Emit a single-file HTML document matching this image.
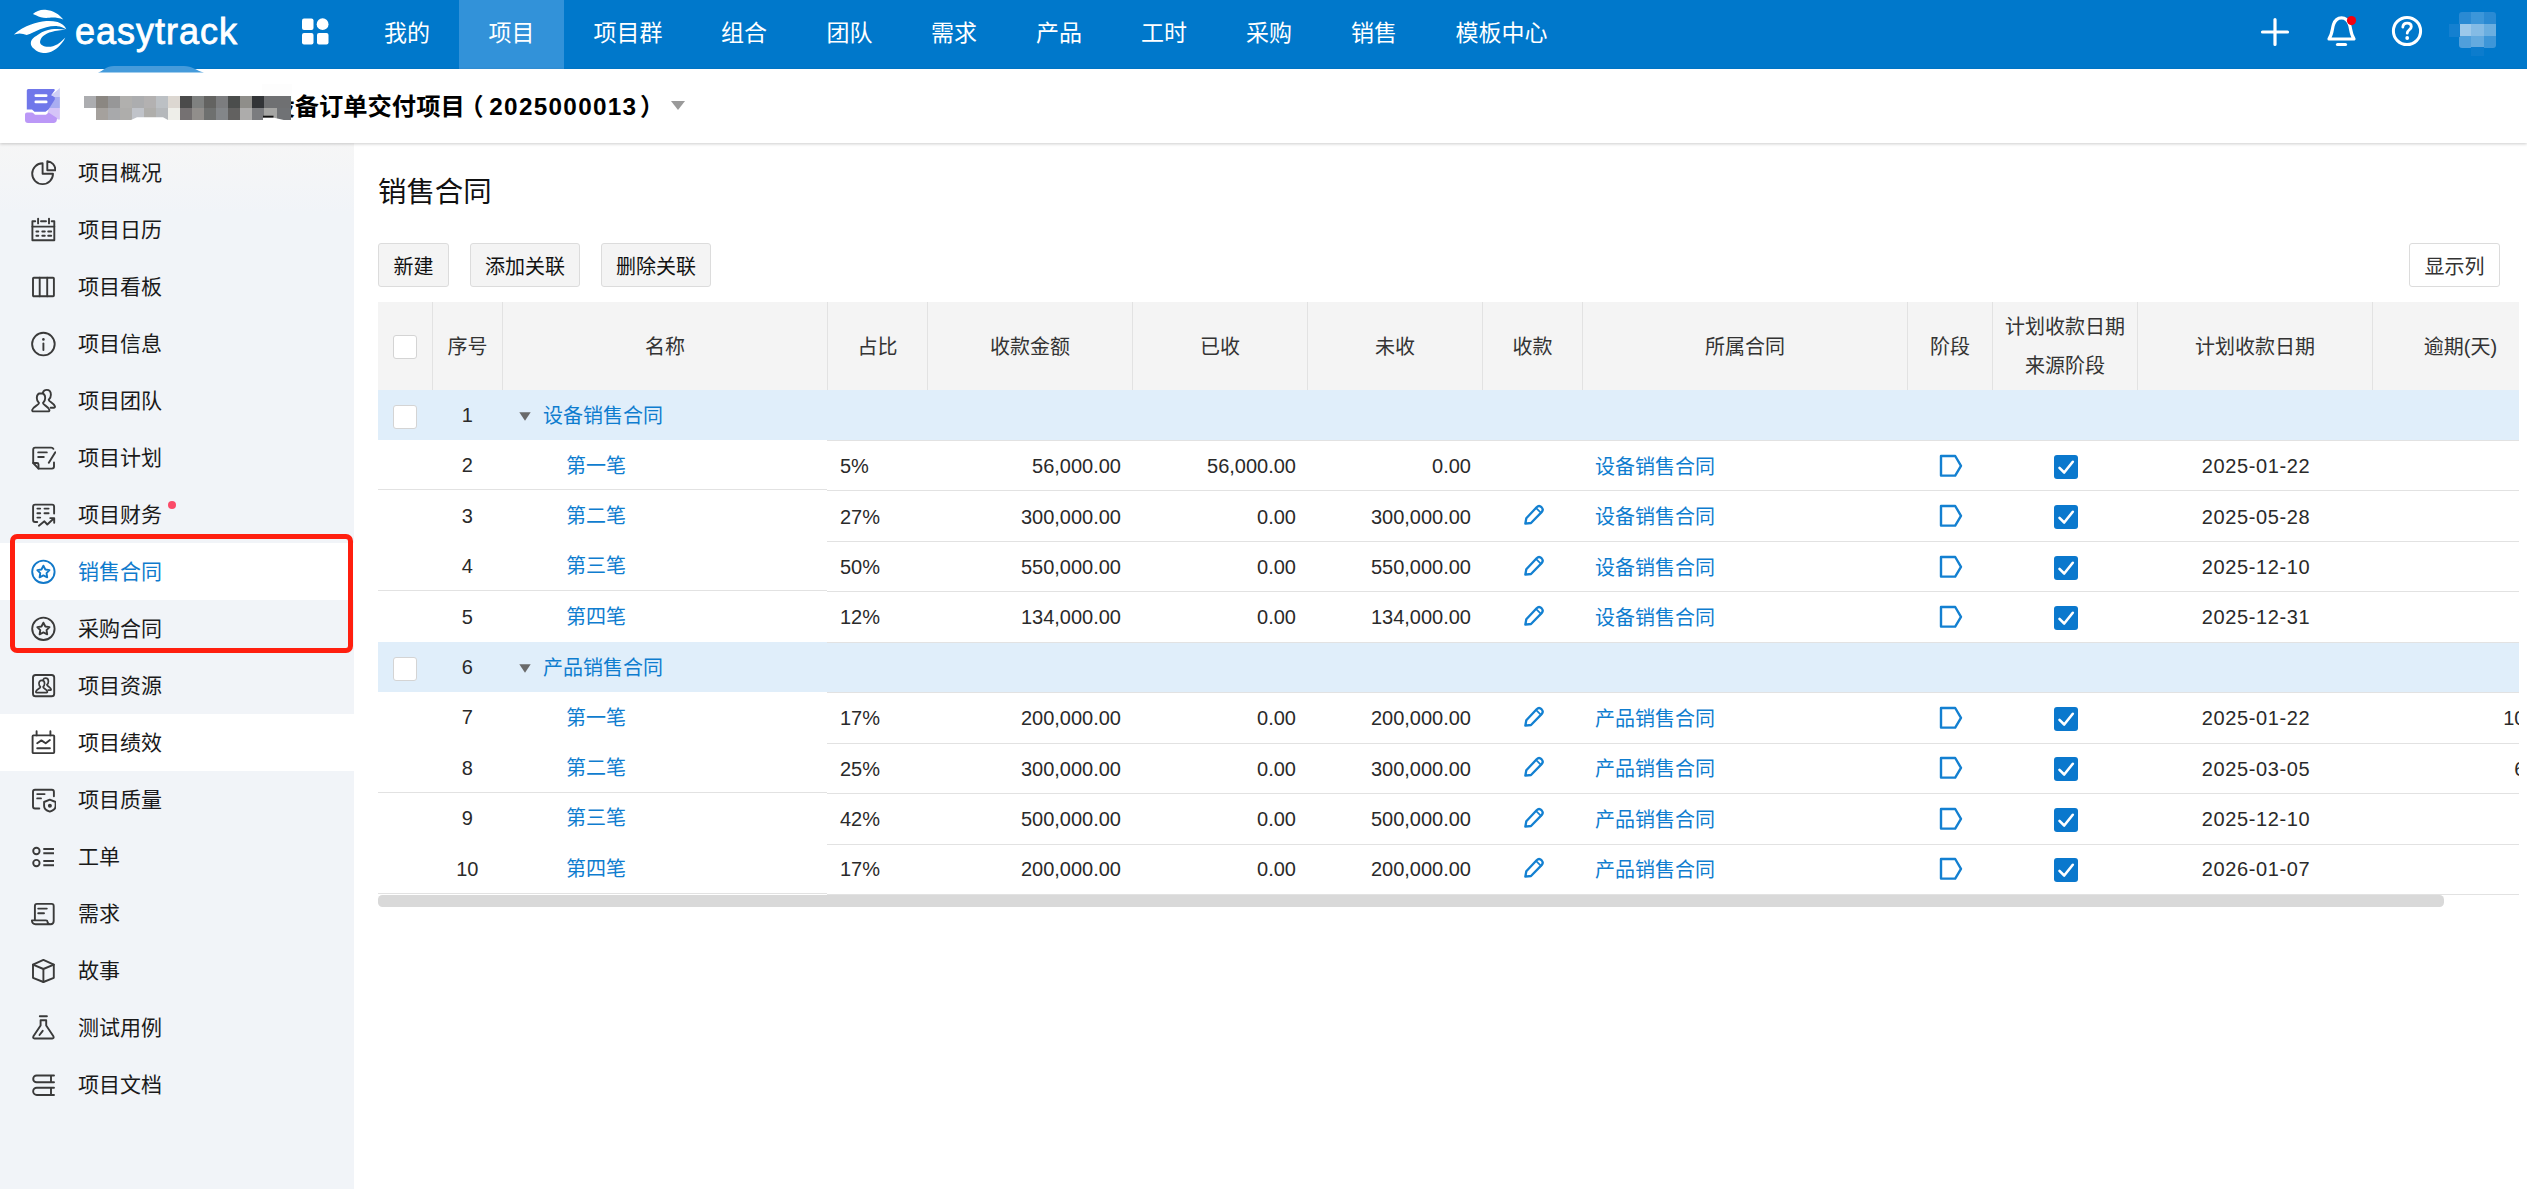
<!DOCTYPE html>
<html lang="zh-CN">
<head>
<meta charset="utf-8">
<title>销售合同</title>
<style>
*{box-sizing:border-box;margin:0;padding:0}
html,body{width:2527px;height:1189px;overflow:hidden;background:#fff}
body{font-family:"Liberation Sans","Noto Sans CJK SC",sans-serif;color:#222;position:relative}
.abs{position:absolute}
/* top bar */
#top{position:absolute;left:0;top:0;width:2527px;height:69px;background:#0078cb}
#top .nav{position:absolute;top:0;height:69px;line-height:66px;color:#fff;font-size:23px;white-space:nowrap;transform:translateX(-50%)}
#top .act{position:absolute;left:459px;top:0;width:105px;height:69px;background:#3292d9}
#logotext{position:absolute;left:75px;top:5.5px;color:#fff;font-size:36px;line-height:52px;letter-spacing:1px;white-space:nowrap;-webkit-text-stroke:0.8px #fff}
/* title bar */
#tbar{position:absolute;left:0;top:69px;width:2527px;height:74px;background:#fff;box-shadow:0 1px 3px rgba(0,0,0,.2);z-index:3}
#ptitle{position:absolute;left:270.4px;top:20.2px;font-size:24.3px;font-weight:700;line-height:36px;color:#000;white-space:nowrap}
/* sidebar */
#side{position:absolute;left:0;top:143px;width:354px;height:1046px;background:linear-gradient(#f6f6f6 0,#f1f4f8 70px,#f1f4f8 100%)}
.si{position:absolute;left:0;width:354px;height:57px}
.si .t{position:absolute;left:78px;top:0;line-height:58px;font-size:21px;color:#1a1a1a;white-space:nowrap}
.si svg{position:absolute;left:30px;top:15.5px;color:#3a3a3a;width:26px;height:26px;fill:none;stroke:#3a3a3a;stroke-width:1.9;stroke-linecap:round;stroke-linejoin:round}
.si.on{background:#fff}
.si.on .t{color:#0f7bcd}
.si.on svg{stroke:#1279c9;color:#1279c9}
.si.hv{background:#fff}
#redbox{position:absolute;left:9.5px;top:534px;width:343px;height:119px;border:5px solid #ff1f0f;border-radius:7px;z-index:5}
/* main */
#h1{position:absolute;left:378px;top:169.5px;font-size:28.4px;line-height:44px;color:#111;white-space:nowrap}
.btn{position:absolute;top:243px;height:44px;border:1px solid #dcdcdc;border-radius:3px;background:#f4f4f4;font-size:20px;line-height:46px;text-align:center;color:#111;white-space:nowrap;overflow:hidden}
/* table */
#thead{position:absolute;left:378px;top:302px;width:2141px;height:88px;background:#f4f4f4}
.th{position:absolute;top:0;height:88px;font-size:20px;color:#333;text-align:center;white-space:nowrap;border-left:1px solid #e2e2e2;display:flex;align-items:center;justify-content:center;line-height:39px;padding-top:2px}
.row{position:absolute;left:378px;width:2141px;height:50.4px;overflow:hidden}
.row.g{background:#e0eefa}
.row .c{position:absolute;top:0;height:50.4px;line-height:50px;font-size:20px;color:#2a2a2a;white-space:nowrap}
.row a{color:#0f7dcf;text-decoration:none;position:relative;top:0.2px}
.row.g a{top:0.9px}
.row .c.r{top:0.8px}
.row .c.r a{top:0.8px}
.ln{position:absolute;height:1px;background:#e2e2e2}
.cb{position:absolute;width:24px;height:24px;border:1px solid #d4d4d4;border-radius:3px;background:#fff}
.ck{position:absolute;width:24px;height:24px;border-radius:3px;background:#0a78cd}
.ck svg,.tg svg,.pn svg{position:absolute;left:0;top:0}
</style>
</head>
<body>
<div id="top">
  <div class="act"></div>
  <div id="logotext">easytrack</div>
  <svg class="abs" style="left:0;top:0" width="80" height="60" viewBox="0 0 80 60" fill="#fff">
    <path d="M32.900 13.900C36 11 41 9.300 45.500 9.800C53 10.500 59.500 14.500 63.300 19.500C58 17.500 53 17.300 49.400 17.800C44 18.300 39.500 17.500 36.500 15.600C35.300 14.900 34 14.300 32.900 13.900Z"/>
    <path d="M13.900 34.500C19 30 25 26.500 31 24.600C36 22.800 41 21.500 46.300 21.100C50 20.800 54 21.200 57.600 22.100C61.500 23.200 64.800 26 66.400 29.300C63.500 27.500 60.500 26.500 57.600 26.200C54 25.900 50 26.300 46.300 27.300C42 28.500 38 30 34 31.900C31.500 33 29 34.200 26.700 35C24.500 34 22 33.500 19.500 33.400C17.500 33.500 15.500 34 13.900 34.500Z"/>
    <path d="M65.800 29.800C61 28.800 56 28.700 51.400 29.300C47 30 42.500 31.700 39.100 34C35 36.500 31.500 39 30.900 42C30.300 45 31.800 47 34 48.800C36.500 51.500 39.500 52.800 43.200 53C47 53 50.500 52.200 53.500 50.400C57 48.500 59.500 46 61.700 43.200C63.300 41.500 64.500 39.500 65.300 37.600C63 40 60.500 42.500 57.600 44.200C54.500 45.900 51.500 46.800 48.400 46.800C46 46.800 43.800 46.500 42.200 45.300C40.500 44.200 39.800 43 40.100 41.200C40.500 39 41.700 37.300 43.200 36C45.500 34 48.500 32.500 51.400 31.900C56 30.800 61 30.200 65.800 29.800Z"/>
  </svg>
  <svg class="abs" style="left:302px;top:18px" width="27" height="27" viewBox="0 0 27 27" fill="#fff">
    <rect x="0" y="0.5" width="11.5" height="11.5" rx="2"/><circle cx="20.6" cy="6.2" r="5.9"/>
    <rect x="0" y="15" width="11.5" height="11.5" rx="2"/><rect x="15" y="15" width="11.5" height="11.5" rx="2"/>
  </svg>
  <div class="nav" style="left:407px">我的</div>
  <div class="nav" style="left:511.5px">项目</div>
  <div class="nav" style="left:628px">项目群</div>
  <div class="nav" style="left:744px">组合</div>
  <div class="nav" style="left:849.5px">团队</div>
  <div class="nav" style="left:954px">需求</div>
  <div class="nav" style="left:1059px">产品</div>
  <div class="nav" style="left:1164px">工时</div>
  <div class="nav" style="left:1269px">采购</div>
  <div class="nav" style="left:1374px">销售</div>
  <div class="nav" style="left:1501.5px">模板中心</div>
  <svg class="abs" style="left:2259px;top:16px" width="32" height="32" viewBox="0 0 32 32" fill="none" stroke="#fff" stroke-width="3.2" stroke-linecap="round"><path d="M16 3.5V28.5M3.5 16H28.5"/></svg>
  <svg class="abs" style="left:2324px;top:12px" width="36" height="38" viewBox="0 0 36 38" fill="none" stroke="#fff" stroke-width="3.2" stroke-linecap="round" stroke-linejoin="round"><path d="M5 27 C8.5 22 8 17 9.5 12.5 C11 8 14 5.8 17.5 5.8 C21 5.8 24 8 25.500 12.5 C27 17 26.500 22 30 27 Z"/><path d="M13.500 32.5H21.500"/><circle cx="27.5" cy="8.6" r="4.6" fill="#f5000d" stroke="none"/></svg>
  <svg class="abs" style="left:2390px;top:14px" width="34" height="34" viewBox="0 0 34 34" fill="none" stroke="#fff" stroke-width="3" stroke-linecap="round" stroke-linejoin="round"><circle cx="17" cy="17" r="13.6"/><path d="M12.800 13.200 C13 10.500 14.800 9.200 17.200 9.200 C19.700 9.200 21.300 10.700 21.300 12.700 C21.300 15.700 17.200 15.800 17.200 19.200" stroke-width="2.8"/><circle cx="17.200" cy="24" r="1.900" fill="#fff" stroke="none"/></svg>
  <div class="abs" style="left:2459px;top:12px;width:37px;height:36px;border-radius:3px;overflow:hidden">
    <i class="abs" style="left:0.0px;top:0px;width:12.4px;height:12px;background:#2a8ad3"></i>
    <i class="abs" style="left:12.3px;top:0px;width:12.4px;height:12px;background:#3c96d9"></i>
    <i class="abs" style="left:24.6px;top:0px;width:12.4px;height:12px;background:#2a8ad3"></i>
    <i class="abs" style="left:0.0px;top:12px;width:12.4px;height:12px;background:#9cc8ea"></i>
    <i class="abs" style="left:12.3px;top:12px;width:12.4px;height:12px;background:#84bbe5"></i>
    <i class="abs" style="left:24.6px;top:12px;width:12.4px;height:12px;background:#6aaee0"></i>
    <i class="abs" style="left:0.0px;top:24px;width:12.4px;height:12px;background:#4f9fdb"></i>
    <i class="abs" style="left:12.3px;top:24px;width:12.4px;height:12px;background:#63aadf"></i>
    <i class="abs" style="left:24.6px;top:24px;width:12.4px;height:12px;background:#3d96d8"></i>
  </div>
  <i class="abs" style="left:2449px;top:24px;width:11px;height:13px;background:#1480d0"></i>
  <i class="abs" style="left:2471px;top:47px;width:13px;height:9px;background:#0c7ccd"></i>
</div>
<div id="tbar">
  <svg class="abs" style="left:96px;top:-4px" width="112" height="8" viewBox="0 0 112 8"><path d="M2 7.500C8 5.500 10 1 18 1H88C96 1 100 5.500 108 7.500Z" fill="#459bdb"/></svg>
  <svg class="abs" style="left:24px;top:18px" width="38" height="38" viewBox="0 0 38 38">
    <path fill="#cfd0f6" d="M35.900 1L27.200 8.300L30.800 9.800H35.900Z"/>
    <path fill="#a9adf1" d="M30.800 9.800H35.900V21H25Z"/>
    <path fill="#d5c4f8" d="M25.200 21H35.900V32.500H34L23.500 26Z"/>
    <path fill="#7077ea" d="M4.300 1.900H30L31 3L27.200 8.300L30.800 10V12.500L24.500 22.500L21.500 24.800H10.500L8 22.600H2.800V3.400Q2.800 1.900 4.300 1.900Z"/>
    <path stroke="#fff" stroke-width="2.700" stroke-linecap="round" d="M11.800 8.700H22.200M11.800 14.900H22.200"/>
    <path fill="#bb98f7" d="M1 27.500Q1 25.400 3 25.400H7.500Q9 25.400 10 26.700L11 27.800H22L24.600 25.400L33 31Q33 35.900 30 35.900H4Q1 35.900 1 32.900Z"/>
  </svg>
  <div class="abs" style="left:84px;top:27px;width:208px;height:24px;z-index:2">
    <i class="abs" style="left:0.0px;top:0;width:12.2px;height:12px;background:#acadb0"></i><i class="abs" style="left:0.0px;top:12px;width:12.2px;height:12px;background:#ffffff"></i>
    <i class="abs" style="left:12.0px;top:0;width:12.2px;height:12px;background:#8b8782"></i><i class="abs" style="left:12.0px;top:12px;width:12.2px;height:12px;background:#a5a19d"></i>
    <i class="abs" style="left:24.1px;top:0;width:12.2px;height:12px;background:#979798"></i><i class="abs" style="left:24.1px;top:12px;width:12.2px;height:12px;background:#a8a9ab"></i>
    <i class="abs" style="left:36.1px;top:0;width:12.2px;height:12px;background:#b1b0ae"></i><i class="abs" style="left:36.1px;top:12px;width:12.2px;height:12px;background:#aeadab"></i>
    <i class="abs" style="left:48.1px;top:0;width:12.2px;height:12px;background:#acadaf"></i><i class="abs" style="left:48.1px;top:12px;width:12.2px;height:12px;background:#c0c3c9"></i>
    <i class="abs" style="left:60.1px;top:0;width:12.2px;height:12px;background:#b3b1b1"></i><i class="abs" style="left:60.1px;top:12px;width:12.2px;height:12px;background:#afaeab"></i>
    <i class="abs" style="left:72.2px;top:0;width:12.2px;height:12px;background:#bcc0c4"></i><i class="abs" style="left:72.2px;top:12px;width:12.2px;height:12px;background:#b5b8bb"></i>
    <i class="abs" style="left:84.2px;top:0;width:12.2px;height:12px;background:#dcd7d1"></i><i class="abs" style="left:84.2px;top:12px;width:12.2px;height:12px;background:#eeeee9"></i>
    <i class="abs" style="left:96.2px;top:0;width:12.2px;height:12px;background:#4b4b4b"></i><i class="abs" style="left:96.2px;top:12px;width:12.2px;height:12px;background:#757172"></i>
    <i class="abs" style="left:108.3px;top:0;width:12.2px;height:12px;background:#7f8180"></i><i class="abs" style="left:108.3px;top:12px;width:12.2px;height:12px;background:#918e8b"></i>
    <i class="abs" style="left:120.3px;top:0;width:12.2px;height:12px;background:#636361"></i><i class="abs" style="left:120.3px;top:12px;width:12.2px;height:12px;background:#6e706f"></i>
    <i class="abs" style="left:132.3px;top:0;width:12.2px;height:12px;background:#7c7d7f"></i><i class="abs" style="left:132.3px;top:12px;width:12.2px;height:12px;background:#838689"></i>
    <i class="abs" style="left:144.4px;top:0;width:12.2px;height:12px;background:#4b4d4c"></i><i class="abs" style="left:144.4px;top:12px;width:12.2px;height:12px;background:#626160"></i>
    <i class="abs" style="left:156.4px;top:0;width:12.2px;height:12px;background:#8f8e8a"></i><i class="abs" style="left:156.4px;top:12px;width:12.2px;height:12px;background:#adacab"></i>
    <i class="abs" style="left:168.4px;top:0;width:12.2px;height:12px;background:#323437"></i><i class="abs" style="left:168.4px;top:12px;width:12.2px;height:12px;background:#7b7c7f"></i>
    <i class="abs" style="left:180.4px;top:0;width:12.2px;height:12px;background:#6f7072"></i><i class="abs" style="left:180.4px;top:12px;width:12.2px;height:12px;background:#a5a5a3"></i>
    <i class="abs" style="left:192.5px;top:0;width:14.6px;height:12px;background:#6f7072"></i><i class="abs" style="left:192.5px;top:12px;width:14.6px;height:12px;background:#707275"></i>
    <svg class="abs" style="left:0;top:0" width="206" height="24" viewBox="0 0 206 24"><path d="M47 24L53 21.300H79L84 24Z" fill="#fff"/><path d="M179 19.700H189.500V21.800H179Z" fill="#111"/><path d="M179 24.500V21.800H190L202 24.500Z" fill="#fff"/></svg>
  </div>
  <i class="abs" style="left:262px;top:15px;width:30px;height:12px;background:#fdfdfd;z-index:2"></i>
  <div id="ptitle">设备订单交付项目<span style="margin-left:-5.500px">（</span><span style="letter-spacing:1.3px;margin:0 2.600px 0 5.700px">2025000013</span>）</div>
  <svg class="abs" style="left:670px;top:31px" width="16" height="11" viewBox="0 0 16 11"><path d="M1 1H15L8 10Z" fill="#9a9a9a"/></svg>
</div>
<div id="side">
  <div class="si " style="top:1px"><svg viewBox="0 0 26 26"><path d="M12.600 3.300A10.400 10.400 0 1 0 23 13.700H12.600Z"/><path d="M17.300 1.300V10.300H25.300A8.500 8.500 0 0 0 17.300 1.300Z"/></svg><span class="t">项目概况</span></div>
  <div class="si " style="top:58px"><svg viewBox="0 0 26 26"><path d="M5.200 4.300H2.400V23.300H24.300V4.300H21.700M11 4.300H16"/><path d="M8.100 1.600V6.400M19 1.600V6.400M2.400 9.600H24.300"/><path d="M6.400 14.500H8.300M12.300 14.500H14.800M18.200 14.500H21.200M6.400 18.800H8.300M12.300 18.800H14.800M18.200 18.800H21.200" stroke-width="1.900"/></svg><span class="t">项目日历</span></div>
  <div class="si " style="top:115px"><svg viewBox="0 0 26 26"><rect x="3" y="3.700" width="20.900" height="18.600" rx="0.800"/><path d="M9.700 3.700V22.300M17.200 3.700V22.300"/></svg><span class="t">项目看板</span></div>
  <div class="si " style="top:172px"><svg viewBox="0 0 26 26"><circle cx="13.400" cy="13.100" r="11.300"/><path d="M13.400 12.500V19"/><circle cx="13.400" cy="8.400" r="1.300" fill="currentColor" stroke="none"/></svg><span class="t">项目信息</span></div>
  <div class="si " style="top:229px"><svg viewBox="0 0 26 26"><path d="M11 5.2C8.3 5.2 6.8 7.3 6.8 10C6.8 12.4 7.800 14 9 15C9 17 3 18.500 2.200 22C2 23 2.600 23.400 3.400 23.400H18.200C19 23.400 19.600 23 19.400 22C18.600 18.500 13 17 13 15C14.200 14 15.200 12.400 15.200 10C15.200 7.300 13.700 5.200 11 5.200Z"/><path d="M12.9 4.6C13.5 2.9 14.9 1.9 16.7 1.9C19.4 1.9 20.9 4 20.9 6.700C20.900 9.100 19.900 10.700 18.700 11.700C18.700 13.700 24 14.900 24.900 18.300C25.100 19.200 24.600 19.700 23.800 19.700H20.600"/></svg><span class="t">项目团队</span></div>
  <div class="si " style="top:286px"><svg viewBox="0 0 26 26"><path d="M23.400 3.800C23 3 22.200 2.600 21.200 2.600H5.200Q3.200 2.600 3.200 4.600V18L8.500 23.600H22Q24 23.600 24 21.600V17.500"/><path d="M3.200 18H7Q8.500 18 8.500 19.500V23.600"/><path d="M8.200 7.400H16.800M8.200 12H13.800M25.300 7.200L18.800 17.800"/></svg><span class="t">项目计划</span></div>
  <div class="si " style="top:343px"><svg viewBox="0 0 26 26"><path d="M24.100 11.500V4.600Q24.100 2.600 22.100 2.600H5.100Q3.100 2.600 3.100 4.600V18Q3.100 20 5.100 20H7.200"/><path d="M7.400 6.600H10.200M14.500 6.600H18.600M7.400 11.200H10.200M14.500 11.200H18.600M7.400 15.600H10.200"/><path d="M8.900 23.700L14.400 19.300L17.300 22.500L24 16.300M20.200 16.100H24.200V20.700"/></svg><span class="t">项目财务</span><i class="abs" style="left:168px;top:15px;width:8px;height:8px;border-radius:50%;background:#fb4a68"></i></div>
  <div class="si on" style="top:400px"><svg viewBox="0 0 26 26"><circle cx="13.400" cy="12.800" r="11.200"/><path d="M13.4 6.7L15.35 10.45L19.5 11.1L16.55 14.1L17.2 18.3L13.4 16.4L9.6 18.3L10.25 14.1L7.3 11.1L11.45 10.45Z" stroke-width="1.900"/></svg><span class="t">销售合同</span></div>
  <div class="si " style="top:457px"><svg viewBox="0 0 26 26"><circle cx="13.400" cy="12.800" r="11.200"/><path d="M13.4 6.7L15.35 10.45L19.5 11.1L16.55 14.1L17.2 18.3L13.4 16.4L9.6 18.3L10.25 14.1L7.3 11.1L11.45 10.45Z" stroke-width="1.900"/></svg><span class="t">采购合同</span></div>
  <div class="si " style="top:514px"><svg viewBox="0 0 26 26"><rect x="3" y="2" width="21.200" height="21.300" rx="2.600"/><g transform="translate(4.400,3.900) scale(0.67)" stroke-width="2.500"><path d="M11 5.2C8.3 5.2 6.8 7.3 6.8 10C6.8 12.4 7.800 14 9 15C9 17 3 18.500 2.200 22C2 23 2.600 23.400 3.400 23.400H18.200C19 23.400 19.600 23 19.400 22C18.600 18.500 13 17 13 15C14.200 14 15.200 12.400 15.200 10C15.200 7.300 13.700 5.200 11 5.200Z"/><path d="M12.9 4.6C13.5 2.9 14.9 1.9 16.7 1.9C19.4 1.9 20.9 4 20.9 6.700C20.900 9.100 19.900 10.700 18.700 11.700C18.700 13.700 24 14.900 24.900 18.300C25.100 19.200 24.600 19.700 23.800 19.700H20.600"/></g></svg><span class="t">项目资源</span></div>
  <div class="si hv" style="top:571px"><svg viewBox="0 0 26 26"><rect x="2.600" y="5.400" width="21.600" height="17.700" rx="0.800"/><path d="M6.600 1.300V5.400M20.400 1.300V5.400M7.200 13.300L11.400 10.400L15.700 13.300L19.900 10M7.200 18.200H19.900"/></svg><span class="t">项目绩效</span></div>
  <div class="si " style="top:628px"><svg viewBox="0 0 26 26"><path d="M23.900 9.300V4.700Q23.900 2.700 21.900 2.700H5Q3 2.700 3 4.700V19.500Q3 21.500 5 21.500H9.300"/><path d="M7.200 7.100H14.600M7.200 11.400H11"/><path d="M19.800 12.600L14.100 15V19C14.100 22 17 23.800 19.800 24.600C22.600 23.800 25.600 22 25.600 19V15Z"/><circle cx="19.900" cy="18.700" r="2" fill="currentColor" stroke="none"/></svg><span class="t">项目质量</span></div>
  <div class="si " style="top:685px"><svg viewBox="0 0 26 26"><circle cx="6.400" cy="7" r="3.200"/><circle cx="6.400" cy="19.100" r="3.200"/><path d="M13.300 5.100H24M13.300 9.300H24M13.300 17H24M13.300 21.300H24" stroke-width="2" stroke-linecap="butt"/></svg><span class="t">工单</span></div>
  <div class="si " style="top:742px"><svg viewBox="0 0 26 26"><path d="M4.900 19.300V4.900Q4.900 2.900 6.900 2.900H21.700Q23.700 2.900 23.700 4.900V20Q23.700 23.200 20.500 23.200H5.500C3.200 23.200 1.900 21.600 1.900 19.400H16Q17.400 19.400 17.500 20.800Q17.900 23.200 20.500 23.200"/><path d="M8.200 7.600H16.800M8.200 12.200H14"/></svg><span class="t">需求</span></div>
  <div class="si " style="top:799px"><svg viewBox="0 0 26 26"><path d="M13.400 1.900L23.800 6.700V19.800L13.400 24L3 19.800V6.700Z"/><path d="M3 6.700L13.400 11L23.800 6.700M13.400 11V24"/></svg><span class="t">故事</span></div>
  <div class="si " style="top:856px"><svg viewBox="0 0 26 26"><path d="M9.800 1.300H16.900"/><path d="M10.600 5.300H16.200V10.500L23.400 21.300Q24.300 23.500 22.300 23.500H4.500Q2.500 23.500 3.400 21.300L10.600 10.500Z"/><path d="M12.700 15.800L9.500 20"/></svg><span class="t">测试用例</span></div>
  <div class="si " style="top:913px"><svg viewBox="0 0 26 26"><path d="M24 3.500H6.600A3.400 3.400 0 0 0 6.600 10.300H24M21 3.500V10.300"/><path d="M24 15.700H6.800A3.650 3.650 0 0 0 6.800 23H24M21 15.700V23"/></svg><span class="t">项目文档</span></div>
</div>
<div id="redbox"></div>
<div id="h1">销售合同</div>
<div id="main">
<div class="btn" style="left:378px;width:71px">新建</div>
<div class="btn" style="left:470px;width:110px">添加关联</div>
<div class="btn" style="left:601px;width:110px">删除关联</div>
<div class="btn" style="left:2409px;width:91px;background:#fff;color:#333">显示列</div>
<div id="thead">
  <div class="th" style="left:0;width:54px;border-left:0"><i class="cb" style="left:15px;top:33px"></i></div>
  <div class="th" style="left:54px;width:70px">序号</div>
  <div class="th" style="left:124px;width:325px">名称</div>
  <div class="th" style="left:449px;width:100px">占比</div>
  <div class="th" style="left:549px;width:205px">收款金额</div>
  <div class="th" style="left:754px;width:175px">已收</div>
  <div class="th" style="left:929px;width:175px">未收</div>
  <div class="th" style="left:1104px;width:100px">收款</div>
  <div class="th" style="left:1204px;width:325px">所属合同</div>
  <div class="th" style="left:1529px;width:85px">阶段</div>
  <div class="th" style="left:1614px;width:145px">计划收款日期<br>来源阶段</div>
  <div class="th" style="left:1759px;width:235px">计划收款日期</div>
  <div class="th" style="left:1994px;width:176px">逾期(天)</div>
</div>
<div class="row g" style="top:390.0px"><i class="cb" style="left:15px;top:15px"></i><span class="c" style="left:54px;width:70.5px;text-align:center">1</span><svg class="abs" style="left:140.500px;top:21.500px" width="12" height="9" viewBox="0 0 12 9"><path d="M0.300 0.300H11.700L6 8.700Z" fill="#6a6a6a"/></svg><span class="c" style="left:165px"><a>设备销售合同</a></span></div>
<div class="row" style="top:440.4px"><span class="c" style="left:54px;width:70.5px;text-align:center">2</span><span class="c" style="left:188px"><a>第一笔</a></span><span class="c r" style="left:462px">5%</span><span class="c r" style="left:550px;width:193px;text-align:right">56,000.00</span><span class="c r" style="left:755px;width:163px;text-align:right">56,000.00</span><span class="c r" style="left:930px;width:163px;text-align:right">0.00</span><span class="c r" style="left:1217px"><a>设备销售合同</a></span><span class="tg abs" style="left:1561px;top:13.500px;width:24px;height:24px"><svg width="24" height="24" viewBox="0 0 24 24" fill="none" stroke="#1380d1" stroke-width="2.400" stroke-linejoin="round"><path d="M2 2H16.200L22 11.800L16.200 21.600H2Z"/></svg></span><span class="ck" style="left:1676px;top:14.500px"><svg width="24" height="24" viewBox="0 0 24 24" fill="none" stroke="#fff" stroke-width="2.600" stroke-linecap="round" stroke-linejoin="round"><path d="M5.500 12.800L10.200 17.500L18.800 6.800"/></svg></span><span class="c r" style="left:1760.500px;width:235px;text-align:center;letter-spacing:0.600px">2025-01-22</span></div>
<div class="row" style="top:490.8px"><span class="c" style="left:54px;width:70.5px;text-align:center">3</span><span class="c" style="left:188px"><a>第二笔</a></span><span class="c r" style="left:462px">27%</span><span class="c r" style="left:550px;width:193px;text-align:right">300,000.00</span><span class="c r" style="left:755px;width:163px;text-align:right">0.00</span><span class="c r" style="left:930px;width:163px;text-align:right">300,000.00</span><span class="pn abs" style="left:1145px;top:13.500px;width:22px;height:22px"><svg width="22" height="22" viewBox="0 0 22 22" fill="none" stroke="#1380d1" stroke-width="2.300" stroke-linejoin="round" stroke-linecap="round"><path d="M2.300 19.700L3.300 14.300L13.600 3.300C15 1.900 17.100 1.900 18.500 3.200C19.900 4.600 19.900 6.700 18.600 8.100L8 19L2.300 19.700Z"/><path d="M13.200 4.200L17.800 8.600" stroke-width="1.700"/></svg></span><span class="c r" style="left:1217px"><a>设备销售合同</a></span><span class="tg abs" style="left:1561px;top:13.500px;width:24px;height:24px"><svg width="24" height="24" viewBox="0 0 24 24" fill="none" stroke="#1380d1" stroke-width="2.400" stroke-linejoin="round"><path d="M2 2H16.200L22 11.800L16.200 21.600H2Z"/></svg></span><span class="ck" style="left:1676px;top:14.500px"><svg width="24" height="24" viewBox="0 0 24 24" fill="none" stroke="#fff" stroke-width="2.600" stroke-linecap="round" stroke-linejoin="round"><path d="M5.500 12.800L10.200 17.500L18.800 6.800"/></svg></span><span class="c r" style="left:1760.500px;width:235px;text-align:center;letter-spacing:0.600px">2025-05-28</span></div>
<div class="row" style="top:541.2px"><span class="c" style="left:54px;width:70.5px;text-align:center">4</span><span class="c" style="left:188px"><a>第三笔</a></span><span class="c r" style="left:462px">50%</span><span class="c r" style="left:550px;width:193px;text-align:right">550,000.00</span><span class="c r" style="left:755px;width:163px;text-align:right">0.00</span><span class="c r" style="left:930px;width:163px;text-align:right">550,000.00</span><span class="pn abs" style="left:1145px;top:13.500px;width:22px;height:22px"><svg width="22" height="22" viewBox="0 0 22 22" fill="none" stroke="#1380d1" stroke-width="2.300" stroke-linejoin="round" stroke-linecap="round"><path d="M2.300 19.700L3.300 14.300L13.600 3.300C15 1.900 17.100 1.900 18.500 3.200C19.900 4.600 19.900 6.700 18.600 8.100L8 19L2.300 19.700Z"/><path d="M13.200 4.200L17.800 8.600" stroke-width="1.700"/></svg></span><span class="c r" style="left:1217px"><a>设备销售合同</a></span><span class="tg abs" style="left:1561px;top:13.500px;width:24px;height:24px"><svg width="24" height="24" viewBox="0 0 24 24" fill="none" stroke="#1380d1" stroke-width="2.400" stroke-linejoin="round"><path d="M2 2H16.200L22 11.800L16.200 21.600H2Z"/></svg></span><span class="ck" style="left:1676px;top:14.500px"><svg width="24" height="24" viewBox="0 0 24 24" fill="none" stroke="#fff" stroke-width="2.600" stroke-linecap="round" stroke-linejoin="round"><path d="M5.500 12.800L10.200 17.500L18.800 6.800"/></svg></span><span class="c r" style="left:1760.500px;width:235px;text-align:center;letter-spacing:0.600px">2025-12-10</span></div>
<div class="row" style="top:591.6px"><span class="c" style="left:54px;width:70.5px;text-align:center">5</span><span class="c" style="left:188px"><a>第四笔</a></span><span class="c r" style="left:462px">12%</span><span class="c r" style="left:550px;width:193px;text-align:right">134,000.00</span><span class="c r" style="left:755px;width:163px;text-align:right">0.00</span><span class="c r" style="left:930px;width:163px;text-align:right">134,000.00</span><span class="pn abs" style="left:1145px;top:13.500px;width:22px;height:22px"><svg width="22" height="22" viewBox="0 0 22 22" fill="none" stroke="#1380d1" stroke-width="2.300" stroke-linejoin="round" stroke-linecap="round"><path d="M2.300 19.700L3.300 14.300L13.600 3.300C15 1.900 17.100 1.900 18.500 3.200C19.900 4.600 19.900 6.700 18.600 8.100L8 19L2.300 19.700Z"/><path d="M13.200 4.200L17.800 8.600" stroke-width="1.700"/></svg></span><span class="c r" style="left:1217px"><a>设备销售合同</a></span><span class="tg abs" style="left:1561px;top:13.500px;width:24px;height:24px"><svg width="24" height="24" viewBox="0 0 24 24" fill="none" stroke="#1380d1" stroke-width="2.400" stroke-linejoin="round"><path d="M2 2H16.200L22 11.800L16.200 21.600H2Z"/></svg></span><span class="ck" style="left:1676px;top:14.500px"><svg width="24" height="24" viewBox="0 0 24 24" fill="none" stroke="#fff" stroke-width="2.600" stroke-linecap="round" stroke-linejoin="round"><path d="M5.500 12.800L10.200 17.500L18.800 6.800"/></svg></span><span class="c r" style="left:1760.500px;width:235px;text-align:center;letter-spacing:0.600px">2025-12-31</span></div>
<div class="row g" style="top:642.0px"><i class="cb" style="left:15px;top:15px"></i><span class="c" style="left:54px;width:70.5px;text-align:center">6</span><svg class="abs" style="left:140.500px;top:21.500px" width="12" height="9" viewBox="0 0 12 9"><path d="M0.300 0.300H11.700L6 8.700Z" fill="#6a6a6a"/></svg><span class="c" style="left:165px"><a>产品销售合同</a></span></div>
<div class="row" style="top:692.4px"><span class="c" style="left:54px;width:70.5px;text-align:center">7</span><span class="c" style="left:188px"><a>第一笔</a></span><span class="c r" style="left:462px">17%</span><span class="c r" style="left:550px;width:193px;text-align:right">200,000.00</span><span class="c r" style="left:755px;width:163px;text-align:right">0.00</span><span class="c r" style="left:930px;width:163px;text-align:right">200,000.00</span><span class="pn abs" style="left:1145px;top:13.500px;width:22px;height:22px"><svg width="22" height="22" viewBox="0 0 22 22" fill="none" stroke="#1380d1" stroke-width="2.300" stroke-linejoin="round" stroke-linecap="round"><path d="M2.300 19.700L3.300 14.300L13.600 3.300C15 1.900 17.100 1.900 18.500 3.200C19.900 4.600 19.900 6.700 18.600 8.100L8 19L2.300 19.700Z"/><path d="M13.200 4.200L17.800 8.600" stroke-width="1.700"/></svg></span><span class="c r" style="left:1217px"><a>产品销售合同</a></span><span class="tg abs" style="left:1561px;top:13.500px;width:24px;height:24px"><svg width="24" height="24" viewBox="0 0 24 24" fill="none" stroke="#1380d1" stroke-width="2.400" stroke-linejoin="round"><path d="M2 2H16.200L22 11.800L16.200 21.600H2Z"/></svg></span><span class="ck" style="left:1676px;top:14.500px"><svg width="24" height="24" viewBox="0 0 24 24" fill="none" stroke="#fff" stroke-width="2.600" stroke-linecap="round" stroke-linejoin="round"><path d="M5.500 12.800L10.200 17.500L18.800 6.800"/></svg></span><span class="c r" style="left:1760.500px;width:235px;text-align:center;letter-spacing:0.600px">2025-01-22</span><span class="c r" style="left:2100px;width:58.500px;text-align:right">101</span></div>
<div class="row" style="top:742.8px"><span class="c" style="left:54px;width:70.5px;text-align:center">8</span><span class="c" style="left:188px"><a>第二笔</a></span><span class="c r" style="left:462px">25%</span><span class="c r" style="left:550px;width:193px;text-align:right">300,000.00</span><span class="c r" style="left:755px;width:163px;text-align:right">0.00</span><span class="c r" style="left:930px;width:163px;text-align:right">300,000.00</span><span class="pn abs" style="left:1145px;top:13.500px;width:22px;height:22px"><svg width="22" height="22" viewBox="0 0 22 22" fill="none" stroke="#1380d1" stroke-width="2.300" stroke-linejoin="round" stroke-linecap="round"><path d="M2.300 19.700L3.300 14.300L13.600 3.300C15 1.900 17.100 1.900 18.500 3.200C19.900 4.600 19.900 6.700 18.600 8.100L8 19L2.300 19.700Z"/><path d="M13.200 4.200L17.800 8.600" stroke-width="1.700"/></svg></span><span class="c r" style="left:1217px"><a>产品销售合同</a></span><span class="tg abs" style="left:1561px;top:13.500px;width:24px;height:24px"><svg width="24" height="24" viewBox="0 0 24 24" fill="none" stroke="#1380d1" stroke-width="2.400" stroke-linejoin="round"><path d="M2 2H16.200L22 11.800L16.200 21.600H2Z"/></svg></span><span class="ck" style="left:1676px;top:14.500px"><svg width="24" height="24" viewBox="0 0 24 24" fill="none" stroke="#fff" stroke-width="2.600" stroke-linecap="round" stroke-linejoin="round"><path d="M5.500 12.800L10.200 17.500L18.800 6.800"/></svg></span><span class="c r" style="left:1760.500px;width:235px;text-align:center;letter-spacing:0.600px">2025-03-05</span><span class="c r" style="left:2100px;width:58.500px;text-align:right">60</span></div>
<div class="row" style="top:793.2px"><span class="c" style="left:54px;width:70.5px;text-align:center">9</span><span class="c" style="left:188px"><a>第三笔</a></span><span class="c r" style="left:462px">42%</span><span class="c r" style="left:550px;width:193px;text-align:right">500,000.00</span><span class="c r" style="left:755px;width:163px;text-align:right">0.00</span><span class="c r" style="left:930px;width:163px;text-align:right">500,000.00</span><span class="pn abs" style="left:1145px;top:13.500px;width:22px;height:22px"><svg width="22" height="22" viewBox="0 0 22 22" fill="none" stroke="#1380d1" stroke-width="2.300" stroke-linejoin="round" stroke-linecap="round"><path d="M2.300 19.700L3.300 14.300L13.600 3.300C15 1.900 17.100 1.900 18.500 3.200C19.900 4.600 19.900 6.700 18.600 8.100L8 19L2.300 19.700Z"/><path d="M13.200 4.200L17.800 8.600" stroke-width="1.700"/></svg></span><span class="c r" style="left:1217px"><a>产品销售合同</a></span><span class="tg abs" style="left:1561px;top:13.500px;width:24px;height:24px"><svg width="24" height="24" viewBox="0 0 24 24" fill="none" stroke="#1380d1" stroke-width="2.400" stroke-linejoin="round"><path d="M2 2H16.200L22 11.800L16.200 21.600H2Z"/></svg></span><span class="ck" style="left:1676px;top:14.500px"><svg width="24" height="24" viewBox="0 0 24 24" fill="none" stroke="#fff" stroke-width="2.600" stroke-linecap="round" stroke-linejoin="round"><path d="M5.500 12.800L10.200 17.500L18.800 6.800"/></svg></span><span class="c r" style="left:1760.500px;width:235px;text-align:center;letter-spacing:0.600px">2025-12-10</span></div>
<div class="row" style="top:843.6px"><span class="c" style="left:54px;width:70.5px;text-align:center">10</span><span class="c" style="left:188px"><a>第四笔</a></span><span class="c r" style="left:462px">17%</span><span class="c r" style="left:550px;width:193px;text-align:right">200,000.00</span><span class="c r" style="left:755px;width:163px;text-align:right">0.00</span><span class="c r" style="left:930px;width:163px;text-align:right">200,000.00</span><span class="pn abs" style="left:1145px;top:13.500px;width:22px;height:22px"><svg width="22" height="22" viewBox="0 0 22 22" fill="none" stroke="#1380d1" stroke-width="2.300" stroke-linejoin="round" stroke-linecap="round"><path d="M2.300 19.700L3.300 14.300L13.600 3.300C15 1.900 17.100 1.900 18.500 3.200C19.900 4.600 19.900 6.700 18.600 8.100L8 19L2.300 19.700Z"/><path d="M13.200 4.200L17.800 8.600" stroke-width="1.700"/></svg></span><span class="c r" style="left:1217px"><a>产品销售合同</a></span><span class="tg abs" style="left:1561px;top:13.500px;width:24px;height:24px"><svg width="24" height="24" viewBox="0 0 24 24" fill="none" stroke="#1380d1" stroke-width="2.400" stroke-linejoin="round"><path d="M2 2H16.200L22 11.800L16.200 21.600H2Z"/></svg></span><span class="ck" style="left:1676px;top:14.500px"><svg width="24" height="24" viewBox="0 0 24 24" fill="none" stroke="#fff" stroke-width="2.600" stroke-linecap="round" stroke-linejoin="round"><path d="M5.500 12.800L10.200 17.500L18.800 6.800"/></svg></span><span class="c r" style="left:1760.500px;width:235px;text-align:center;letter-spacing:0.600px">2026-01-07</span></div>
<i class="ln" style="left:827px;top:440px;width:1692px"></i>
<i class="ln" style="left:827px;top:490px;width:1692px"></i>
<i class="ln" style="left:827px;top:541px;width:1692px"></i>
<i class="ln" style="left:827px;top:591px;width:1692px"></i>
<i class="ln" style="left:827px;top:642px;width:1692px"></i>
<i class="ln" style="left:827px;top:692px;width:1692px"></i>
<i class="ln" style="left:827px;top:743px;width:1692px"></i>
<i class="ln" style="left:827px;top:793px;width:1692px"></i>
<i class="ln" style="left:827px;top:844px;width:1692px"></i>
<i class="ln" style="left:827px;top:894px;width:1692px"></i>
<i class="ln" style="left:378px;top:489px;width:449px"></i>
<i class="ln" style="left:378px;top:590px;width:449px"></i>
<i class="ln" style="left:378px;top:792px;width:449px"></i>
<i class="ln" style="left:378px;top:893px;width:449px"></i>
<i class="abs" style="left:378px;top:895px;width:2066px;height:12px;background:#d9d9d9;border-radius:4.500px"></i>
</div>
</body>
</html>
